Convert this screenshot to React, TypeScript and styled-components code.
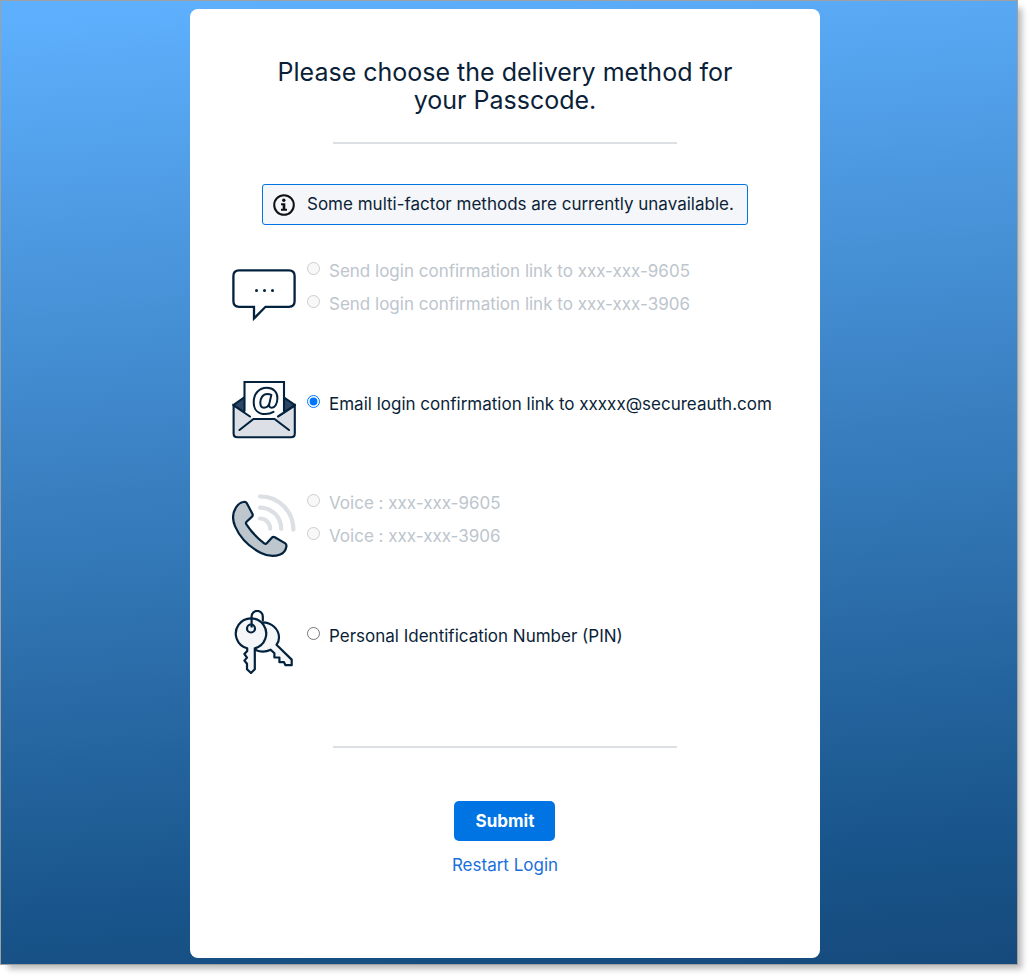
import React, { useState } from "react";
import styled, { createGlobalStyle } from "styled-components";

const ink = "#03223d";

const GlobalStyle = createGlobalStyle`
  *, *::before, *::after { box-sizing: border-box; }
  body {
    margin: 0;
    background: #fff;
    color: #0b1f38;
    font-family: Inter, "Liberation Sans", sans-serif;
    font-size: 17px;
    line-height: 24px;
  }
`;

const Shell = styled.div`
  min-height: 100vh;
  padding: 0 15px 15px 0;
  display: flex;
`;

const Backdrop = styled.main`
  flex: 1;
  display: flex;
  justify-content: center;
  padding: 8px 8px 6px 0;
  border: 1px solid #a0a0a0;
  background: linear-gradient(175deg, #5fb1ff 0%, #18548a 88%, #164a7c 100%);
  box-shadow: 6px 6px 6px -2px rgba(0, 0, 0, 0.27);
`;

const Card = styled.form`
  flex: 0 1 630px;
  display: flex;
  flex-direction: column;
  align-items: center;
  padding: 49px 32px 40px;
  border-radius: 8px;
  background: #fff;
`;

const Title = styled.h1`
  margin: 0;
  max-width: 486px;
  font-size: 25px;
  line-height: 28px;
  font-weight: 400;
  text-align: center;
`;

const Divider = styled.hr`
  width: 344px;
  max-width: 100%;
  height: 2px;
  margin: 0;
  border: 0;
  background: #dce0e5;
`;

const Header = styled.header`
  display: flex;
  flex-direction: column;
  align-items: center;
  gap: 28px;
`;

const Notice = styled.p`
  display: flex;
  align-items: center;
  gap: 12px;
  width: 486px;
  max-width: 100%;
  min-height: 41px;
  margin: 40px 0 37px;
  padding: 0 10px;
  border: 1px solid #0074e0;
  border-radius: 3px;
  background: #f5f6f9;
  line-height: 22px;
`;

const NoticeText = styled.span`
  padding-bottom: 2px;
`;

const Methods = styled.div`
  align-self: stretch;
  display: flex;
  flex-direction: column;
  gap: 52px;
  padding-left: 10px;
  margin-bottom: 72px;
`;

const Method = styled.fieldset`
  display: flex;
  gap: 11px;
  min-width: 0;
  margin: 0;
  padding: 0;
  border: 0;
`;

const MethodIcon = styled.svg`
  flex: none;
  width: 64px;
  height: 64px;
`;

const Options = styled.div`
  display: flex;
  flex-direction: column;
  justify-content: center;
  gap: 2px;
`;

const Option = styled.label<{ $muted?: boolean }>`
  display: flex;
  align-items: flex-start;
  gap: 9px;
  height: 31px;
  color: ${(p) => (p.$muted ? "#bdc5cd" : "#0b1f38")};
  line-height: 18px;
  white-space: nowrap;
`;

const Radio = styled.input`
  width: 13px;
  height: 13px;
  margin: 0;
`;

const Actions = styled.div`
  display: flex;
  flex-direction: column;
  align-items: center;
  gap: 12px;
  margin-top: 53px;
`;

const SubmitButton = styled.button`
  width: 101px;
  height: 40px;
  padding: 0;
  border: 0;
  border-radius: 5px;
  background: #0074e3;
  color: #fff;
  font: inherit;
  font-weight: 700;
`;

const RestartLink = styled.a`
  color: #1a6fdc;
  text-decoration: none;
`;

const ChatIcon = () => (
  <MethodIcon viewBox="0 0 64 64" fill="none" stroke={ink} strokeWidth="2.3" aria-hidden="true">
    <path d="M7 8.3H57Q62.6 8.3 62.6 14V39Q62.6 44.8 57 44.8H33.5L22 56.5V44.8H7Q1.4 44.8 1.4 39V14Q1.4 8.3 7 8.3Z" />
    <g fill={ink} stroke="none">
      <circle cx="24.5" cy="28.5" r="1.5" />
      <circle cx="32.5" cy="28.5" r="1.5" />
      <circle cx="40.5" cy="28.5" r="1.5" />
    </g>
  </MethodIcon>
);

const EmailIcon = () => (
  <MethodIcon viewBox="0 0 64 64" fill="none" stroke={ink} strokeWidth="2.1" strokeLinecap="round" aria-hidden="true">
    <path d="M12 19.5L1.5 27L18 39L46 39L62.8 27L52 19.5Z" fill="#2b4764" />
    <path d="M12.5 37V4H52V37L42 43H22Z" fill="#fff" stroke="none" />
    <path d="M12.5 33V4H52V33" />
    <path d="M1.6 27.5V55.5Q1.6 59.3 5.5 59.3H59Q62.8 59.3 62.8 55.5V27.5L46.5 38.5L42.5 41H21.5L17.5 38.5Z" fill="#dce0e6" stroke="none" />
    <path d="M18 38.5L1.6 27.5V55.5Q1.6 59.3 5.5 59.3H59Q62.8 59.3 62.8 55.5V27.5L46 38.5" />
    <path d="M7.5 52L21.5 41H42.5L57 52" />
    <path d="M41.5 33.8C39 35.4 36.5 36.1 33.3 36.1C25.8 36.1 21.7 31.2 21.7 24.2C21.7 15.6 27.2 9.7 34.8 9.7C41.4 9.7 45.4 14 45.4 19.9C45.4 26.3 42.6 29.8 39.8 29.8C37.6 29.8 36.8 28.4 37.3 25.9L39.3 16.9C38 16.2 36.8 15.9 35.4 15.9C30.8 15.9 28.3 20.2 28.3 24.8C28.3 27.9 29.6 29.7 32 29.7C34.6 29.7 36.5 27.8 37.3 25.5" strokeWidth="2" />
  </MethodIcon>
);

const PhoneIcon = () => (
  <MethodIcon viewBox="0 0 64 64" fill="none" aria-hidden="true">
    <g stroke="#dce0e5" strokeWidth="4.2" strokeLinecap="round">
      <path d="M28 2.3A33.4 33.4 0 0 1 61.4 35.7" />
      <path d="M28 13.6A21.2 21.2 0 0 1 49.2 34.8" />
      <path d="M28 24.5A10.2 10.2 0 0 1 38.2 34.7" />
    </g>
    <path
      d="M11.5 8Q13.7 7.2 14.7 9.1L20.4 19.7Q21.3 21.5 19.8 22.9L14.6 27.7Q13.4 28.9 14.4 30.3C19.5 38 25 44 32.2 49.3Q33.7 50.4 35 49L39.8 43.7Q41 42.3 42.8 43.2L52.9 49.1Q54.8 50.3 54.4 52.5C53.7 56.6 51.7 59.1 48.2 60.5C42.4 62.7 35.4 62.2 29 59C17.8 53.3 7.8 43.3 3.1 32.4C-.3 24.5 1.3 17.4 4.4 12.8C6.3 10 8.7 8.4 11.5 8Z"
      fill="#bdc5cd"
      stroke={ink}
      strokeWidth="2.2"
      strokeLinejoin="round"
    />
  </MethodIcon>
);

const KeysIcon = () => (
  <MethodIcon viewBox="0 0 64 64" fill="#f4f6f8" stroke={ink} strokeWidth="2.2" strokeLinejoin="round" aria-hidden="true">
    <path d="M30.5 12.4C39.5 12.5 47 19 47 27.5C47 30.5 46.3 32.7 44.5 34.8L59.7 49.6V55.2H53.5L52 52.2H47.4V47.5H42.4V43.2L38.7 39.7C33.7 42.3 28.4 42.1 23.5 40Z" />
    <path d="M15.2 38.3A15.2 15.2 0 1 1 22.8 38.3V59.3L19 63L15 59.3V53.8L12.4 50.6L15 47.6L12.4 44.1L15.2 41Z" />
    <circle cx="19" cy="18.5" r="4" />
    <path d="M19.6 17.5V6.5A5.6 5.6 0 0 1 30.8 6.5V11" fill="none" />
  </MethodIcon>
);

const InfoIcon = () => (
  <svg width="22" height="22" viewBox="0 0 22 22" fill="none" aria-hidden="true">
    <circle cx="11" cy="11" r="9.8" stroke="#111" strokeWidth="2" />
    <circle cx="10.8" cy="6.2" r="1.7" fill="#111" />
    <path d="M8 9.3H12.3V14.8H14V16.7H8V14.8H9.7V11.2H8Z" fill="#111" />
  </svg>
);

type Choice = { id: string; label: string; disabled?: boolean };

const methods: { name: string; Icon: React.FC; choices: Choice[] }[] = [
  {
    name: "Text message",
    Icon: ChatIcon,
    choices: [
      { id: "sms-1", label: "Send login confirmation link to xxx-xxx-9605", disabled: true },
      { id: "sms-2", label: "Send login confirmation link to xxx-xxx-3906", disabled: true },
    ],
  },
  {
    name: "Email",
    Icon: EmailIcon,
    choices: [{ id: "email", label: "Email login confirmation link to xxxxx@secureauth.com" }],
  },
  {
    name: "Voice call",
    Icon: PhoneIcon,
    choices: [
      { id: "voice-1", label: "Voice : xxx-xxx-9605", disabled: true },
      { id: "voice-2", label: "Voice : xxx-xxx-3906", disabled: true },
    ],
  },
  {
    name: "PIN",
    Icon: KeysIcon,
    choices: [{ id: "pin", label: "Personal Identification Number (PIN)" }],
  },
];

export default function App() {
  const [selected, setSelected] = useState("email");

  return (
    <>
      <GlobalStyle />
      <Shell>
        <Backdrop>
          <Card onSubmit={(e) => e.preventDefault()}>
            <Header>
              <Title>Please choose the delivery method for your Passcode.</Title>
              <Divider />
            </Header>
            <Notice>
              <InfoIcon />
              <NoticeText>Some multi-factor methods are currently unavailable.</NoticeText>
            </Notice>
            <Methods>
              {methods.map(({ name, Icon, choices }) => (
                <Method key={name} aria-label={name}>
                  <Icon />
                  <Options>
                    {choices.map((c) => (
                      <Option key={c.id} htmlFor={c.id} $muted={c.disabled}>
                        <Radio
                          type="radio"
                          name="delivery"
                          id={c.id}
                          disabled={c.disabled}
                          checked={selected === c.id}
                          onChange={() => setSelected(c.id)}
                        />
                        {c.label}
                      </Option>
                    ))}
                  </Options>
                </Method>
              ))}
            </Methods>
            <Divider />
            <Actions>
              <SubmitButton type="submit">Submit</SubmitButton>
              <RestartLink href="#restart">Restart Login</RestartLink>
            </Actions>
          </Card>
        </Backdrop>
      </Shell>
    </>
  );
}
